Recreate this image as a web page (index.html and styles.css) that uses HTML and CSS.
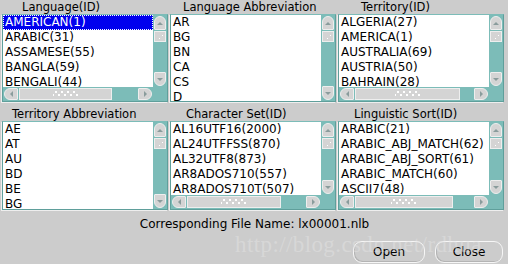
FILE: index.html
```html
<!DOCTYPE html>
<html lang="en">
<head>
    <meta charset="UTF-8">
    <title>Locale Files</title>
    <link rel="stylesheet" href="styles.css">
</head>
<body>

    <div class="lists">

        <div class="panel">
            <div class="label" style="padding-left:20px">Language(ID)</div>
            <div class="listbox hscroll">
                <div class="items">
                    <div class="item selected">AMERICAN(1)</div>
                    <div class="item">ARABIC(31)</div>
                    <div class="item">ASSAMESE(55)</div>
                    <div class="item">BANGLA(59)</div>
                    <div class="item">BENGALI(44)</div>
                </div>
                <div class="vbar">
                    <div class="arrow up"></div>
                    <div class="vthumb"></div>
                    <div class="arrow down"></div>
                </div>
                <div class="hbar">
                    <div class="arrow left"></div>
                    <div class="hthumb" style="width:93px"><span class="grip"></span></div>
                    <div class="arrow right"></div>
                </div>
                <div class="corner"></div>
            </div>
        </div>

        <div class="panel">
            <div class="label" style="padding-left:13px">Language Abbreviation</div>
            <div class="listbox">
                <div class="items">
                    <div class="item">AR</div>
                    <div class="item">BG</div>
                    <div class="item">BN</div>
                    <div class="item">CA</div>
                    <div class="item">CS</div>
                    <div class="item">D</div>
                </div>
                <div class="vbar">
                    <div class="arrow up"></div>
                    <div class="vthumb"></div>
                    <div class="arrow down"></div>
                </div>
            </div>
        </div>

        <div class="panel">
            <div class="label" style="padding-left:23px">Territory(ID)</div>
            <div class="listbox hscroll">
                <div class="items">
                    <div class="item">ALGERIA(27)</div>
                    <div class="item">AMERICA(1)</div>
                    <div class="item">AUSTRALIA(69)</div>
                    <div class="item">AUSTRIA(50)</div>
                    <div class="item">BAHRAIN(28)</div>
                </div>
                <div class="vbar">
                    <div class="arrow up"></div>
                    <div class="vthumb"></div>
                    <div class="arrow down"></div>
                </div>
                <div class="hbar">
                    <div class="arrow left"></div>
                    <div class="hthumb" style="width:105px"><span class="grip"></span></div>
                    <div class="arrow right"></div>
                </div>
                <div class="corner"></div>
            </div>
        </div>

        <div class="panel">
            <div class="label" style="padding-left:10px">Territory Abbreviation</div>
            <div class="listbox">
                <div class="items">
                    <div class="item">AE</div>
                    <div class="item">AT</div>
                    <div class="item">AU</div>
                    <div class="item">BD</div>
                    <div class="item">BE</div>
                    <div class="item">BG</div>
                </div>
                <div class="vbar">
                    <div class="arrow up"></div>
                    <div class="vthumb"></div>
                    <div class="arrow down"></div>
                </div>
            </div>
        </div>

        <div class="panel">
            <div class="label" style="padding-left:16px">Character Set(ID)</div>
            <div class="listbox hscroll">
                <div class="items">
                    <div class="item">AL16UTF16(2000)</div>
                    <div class="item">AL24UTFFSS(870)</div>
                    <div class="item">AL32UTF8(873)</div>
                    <div class="item">AR8ADOS710(557)</div>
                    <div class="item">AR8ADOS710T(507)</div>
                </div>
                <div class="vbar">
                    <div class="arrow up"></div>
                    <div class="vthumb"></div>
                    <div class="arrow down"></div>
                </div>
                <div class="hbar">
                    <div class="arrow left"></div>
                    <div class="hthumb" style="width:94px"><span class="grip"></span></div>
                    <div class="arrow right"></div>
                </div>
                <div class="corner"></div>
            </div>
        </div>

        <div class="panel">
            <div class="label" style="padding-left:16px">Linguistic Sort(ID)</div>
            <div class="listbox hscroll">
                <div class="items">
                    <div class="item">ARABIC(21)</div>
                    <div class="item">ARABIC_ABJ_MATCH(62)</div>
                    <div class="item">ARABIC_ABJ_SORT(61)</div>
                    <div class="item">ARABIC_MATCH(60)</div>
                    <div class="item">ASCII7(48)</div>
                </div>
                <div class="vbar">
                    <div class="arrow up"></div>
                    <div class="vthumb"></div>
                    <div class="arrow down"></div>
                </div>
                <div class="hbar">
                    <div class="arrow left"></div>
                    <div class="hthumb" style="width:98px"><span class="grip"></span></div>
                    <div class="arrow right"></div>
                </div>
                <div class="corner"></div>
            </div>
        </div>

    </div>

    <div class="filename">Corresponding File Name: lx00001.nlb</div>

    <div class="buttons">
        <button class="btn open" type="button">Open</button>
        <button class="btn close" type="button">Close</button>
    </div>

    <!-- watermark stamped over the screenshot -->
    <span class="watermark">http://blog.csdn.net/rdhua</span>

</body>
</html>
```

FILE: styles.css
```css
:root {
    --bg: #cccccc;
    --teal: #7cbcb8;
    --teal-dark: #5f9f9b;
    --knob: #d4d4d4;
    --arrow: #8a9c9c;
}
body {
    margin: 0;
    background: var(--bg);
    font-family: "DejaVu Sans", sans-serif;
    color: #000;
    width: 508px;
    height: 264px;
    overflow: hidden;
    position: relative;
}
.lists {
    display: grid;
    grid-template-columns: repeat(3, 166px);
    column-gap: 2px;
    row-gap: 5px;
    padding: 0 2px;
}
.label {
    height: 14px;
    line-height: 14px;
    font-size: 11.5px;
    white-space: nowrap;
}
.listbox {
    height: 88px;
    box-sizing: border-box;
    border: 1px solid var(--teal-dark);
    border-top-color: var(--teal);
    box-shadow: -1px 1px 0 #eeeeee;
    background: var(--teal);
    display: grid;
    grid-template-columns: 150px 14px;
    grid-template-rows: 86px;
}
.panel:nth-child(n+4) .listbox {
    height: 89px;
    grid-template-rows: 87px;
}
.listbox.hscroll {
    grid-template-rows: 72px 14px;
}
.panel:nth-child(n+4) .listbox.hscroll {
    grid-template-rows: 73px 14px;
}
.items {
    background: #fff;
    overflow: hidden;
}
.item {
    height: 15px;
    line-height: 15px;
    font-size: 12px;
    padding-left: 2px;
    white-space: nowrap;
    box-sizing: border-box;
}
.item.selected {
    background: #0000ee;
    color: #fff;
    outline: 1px dotted #fff;
    outline-offset: -1px;
}
.vbar {
    display: flex;
    flex-direction: column;
    align-items: center;
    padding: 1px 0;
}
.hbar {
    display: flex;
    align-items: center;
    padding: 0 1px;
}
.corner {
    background: var(--teal);
}
.arrow {
    box-sizing: border-box;
    background: var(--knob);
    border: 1px solid #eeeeee;
    display: flex;
    align-items: center;
    justify-content: center;
}
.arrow::after {
    content: "";
    width: 0;
    height: 0;
}
.arrow.up, .arrow.down {
    width: 12px;
    height: 14px;
}
.arrow.up {
    border-radius: 6px 6px 1px 1px;
}
.arrow.down {
    margin-top: auto;
    border-radius: 1px 1px 6px 6px;
}
.arrow.up::after {
    border-left: 3px solid transparent;
    border-right: 3px solid transparent;
    border-bottom: 3px solid var(--arrow);
}
.arrow.down::after {
    border-left: 3px solid transparent;
    border-right: 3px solid transparent;
    border-top: 3px solid var(--arrow);
}
.arrow.left, .arrow.right {
    width: 14px;
    height: 12px;
}
.arrow.left {
    border-radius: 6px 1px 1px 6px;
}
.arrow.right {
    margin-left: auto;
    border-radius: 1px 6px 6px 1px;
}
.arrow.left::after {
    border-top: 3px solid transparent;
    border-bottom: 3px solid transparent;
    border-right: 3px solid var(--arrow);
}
.arrow.right::after {
    border-top: 3px solid transparent;
    border-bottom: 3px solid transparent;
    border-left: 3px solid var(--arrow);
}
.vthumb {
    width: 12px;
    height: 11px;
    box-sizing: border-box;
    margin-top: 1px;
    background: var(--knob);
    border: 1px solid #eeeeee;
    background-image:
        radial-gradient(circle, #ffffff 0.7px, transparent 1px),
        radial-gradient(circle, #ffffff 0.7px, transparent 1px);
    background-size: 3px 3px, 3px 3px;
    background-position: 6px 2px, 3px 5px;
    background-repeat: no-repeat;
}
.hthumb {
    height: 12px;
    box-sizing: border-box;
    margin-left: 1px;
    background: var(--knob);
    border: 1px solid #eeeeee;
    display: flex;
    align-items: center;
    justify-content: center;
}
.grip {
    width: 26px;
    height: 6px;
    background-image:
        radial-gradient(circle, #ffffff 0.8px, transparent 1px),
        radial-gradient(circle, #ffffff 0.8px, transparent 1px);
    background-size: 6px 6px, 6px 6px;
    background-position: 0 -2px, 3px 1px;
}
.filename {
    margin-top: 6px;
    height: 16px;
    line-height: 16px;
    font-size: 12px;
    text-align: center;
    padding-left: 1px;
}
.buttons {
    display: flex;
    justify-content: flex-end;
    gap: 10px;
    padding: 0 5px 0 0;
    margin-top: 9px;
}
.btn {
    height: 22px;
    box-sizing: border-box;
    background: transparent;
    border: 1px solid #f6f6f6;
    border-radius: 9px;
    box-shadow: inset 1px -1px 0 #b4b4b4;
    font-family: "DejaVu Sans", sans-serif;
    font-size: 12px;
    color: #000;
    padding: 0;
}
.btn.open { width: 72px; }
.btn.close { width: 68px; }
.watermark {
    position: absolute;
    left: 235px;
    top: 232px;
    font-family: "Liberation Serif", serif;
    font-size: 23px;
    color: rgba(230, 230, 230, 0.45);
    white-space: nowrap;
    letter-spacing: 0.4px;
    pointer-events: none;
}
```
